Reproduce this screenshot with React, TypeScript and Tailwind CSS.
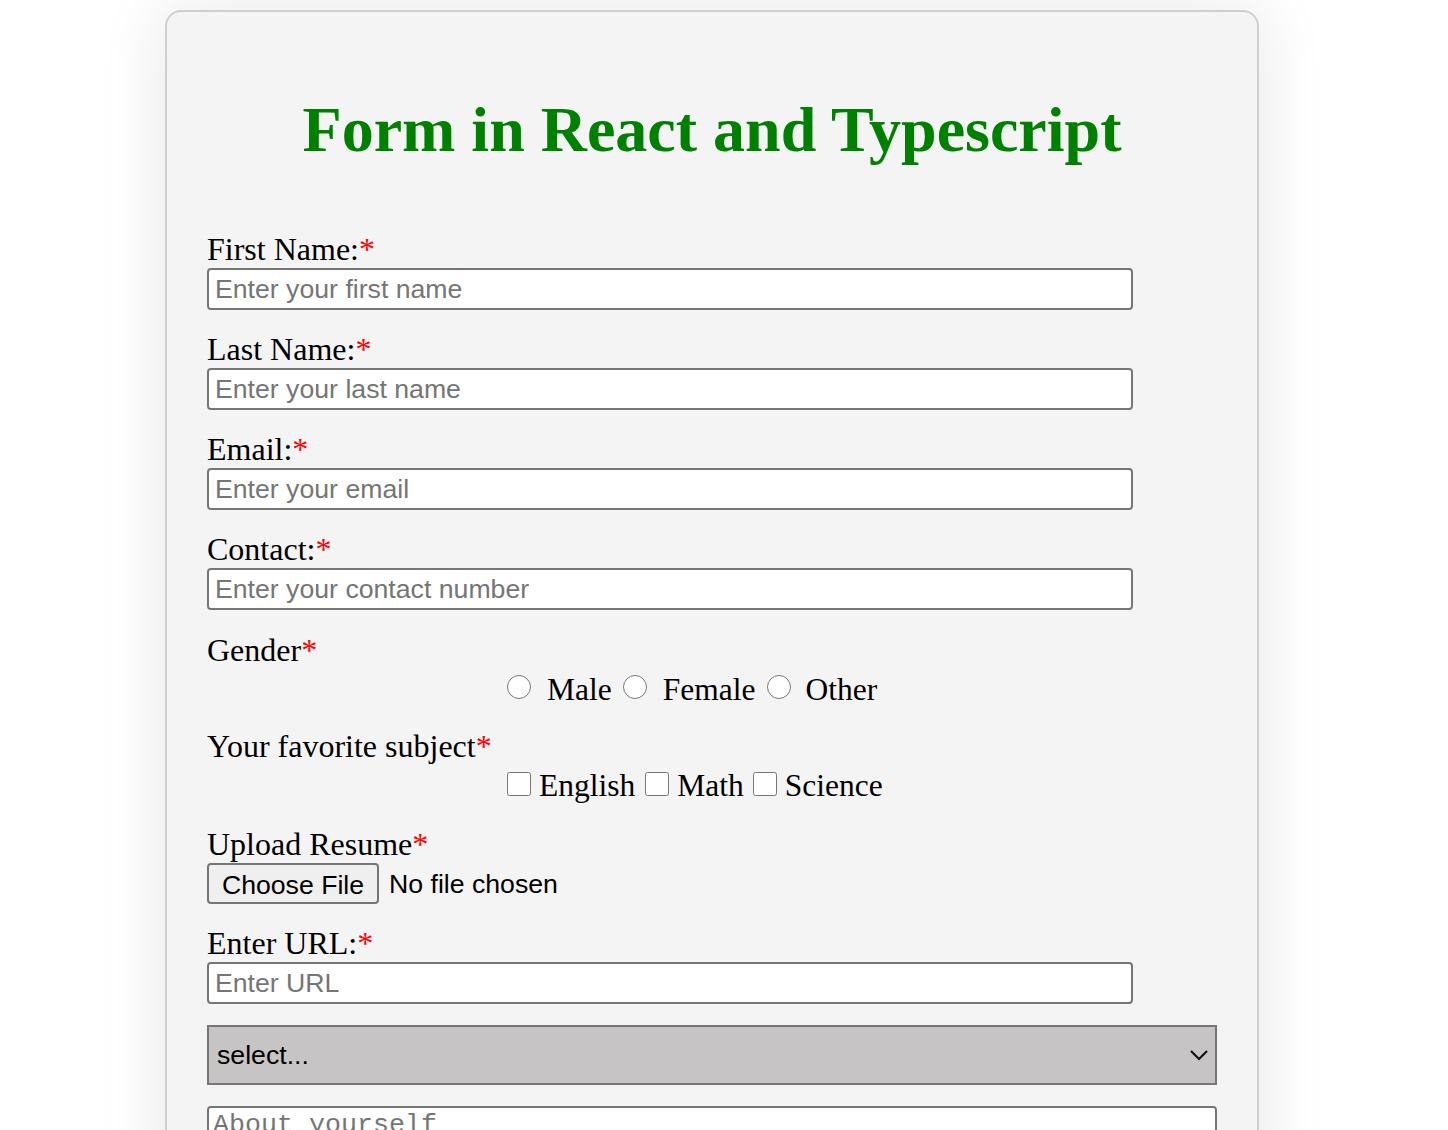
import React from "react";

const serif = "font-['Liberation_Serif',serif]";
const sans = "font-['Liberation_Sans',Arial,sans-serif]";

const Req = () => <span className="text-[#ff0000]">*</span>;

const TextField = ({ label, placeholder, type = "text" }: { label: string; placeholder: string; type?: string }) => {
  return (
    <div className="mb-[22px]">
      <label className="block text-[32px] leading-[36px] -mt-px pb-px">
        {label}
        <Req />
      </label>
      <input
        type={type}
        placeholder={placeholder}
        className={`${sans} block w-[926px] h-[42px] border-2 border-[#767676] rounded-[4px] bg-white px-[6px] text-[26.67px] text-black placeholder:text-[#757575] outline-none`}
      />
    </div>
  );
};

const Radio = ({ name, className }: { name: string; className: string }) => (
  <input type="radio" name={name} className={`w-6 h-6 mt-[3px] shrink-0 ${className}`} />
);

const Check = ({ className }: { className: string }) => (
  <input type="checkbox" className={`w-6 h-6 mt-[4px] shrink-0 ${className}`} />
);

const App = () => {
  return (
    <div className={`${serif} bg-white min-h-screen pt-[10px] overflow-hidden text-black`}>
      <div className="ml-[165px] w-[1094px] bg-[#f4f4f4] border-2 border-[#d3cece] rounded-[16px] shadow-[0_0_70px_rgba(0,0,0,0.1)] px-[40px] pt-[81px] pb-[60px]">
        <h1 className="text-center text-[64px] leading-[74px] font-bold text-[#008000] mb-[65px]">
          Form in React and Typescript
        </h1>

        <form>
          <TextField label="First Name:" placeholder="Enter your first name" />
          <TextField label="Last Name:" placeholder="Enter your last name" />
          <TextField label="Email:" placeholder="Enter your email" type="email" />
          <TextField label="Contact:" placeholder="Enter your contact number" />

          <div className="mb-[20px]">
            <label className="block text-[32px] leading-[36px]">
              Gender
              <Req />
            </label>
            <div className="flex items-start pl-[300px] mt-[4px] text-[31.5px] leading-[36px]">
              <Radio name="gender" className="mr-[16px]" />
              <span>Male</span>
              <Radio name="gender" className="ml-[11px] mr-[16px]" />
              <span>Female</span>
              <Radio name="gender" className="ml-[12px] mr-[14px]" />
              <span>Other</span>
            </div>
          </div>

          <div className="mb-[22px]">
            <label className="block text-[32px] leading-[36px]">
              Your favorite subject
              <Req />
            </label>
            <div className="flex items-start pl-[300px] mt-[4px] text-[31.5px] leading-[36px]">
              <Check className="mr-[8px]" />
              <span>English</span>
              <Check className="ml-[10px] mr-[8px]" />
              <span>Math</span>
              <Check className="ml-[9px] mr-[8px]" />
              <span>Science</span>
            </div>
          </div>

          <div className="mb-[21px]">
            <label className="block text-[32px] leading-[36px]">
              Upload Resume
              <Req />
            </label>
            <div className={`${sans} flex items-center text-[26.67px] mt-[1px]`}>
              <button
                type="button"
                className="h-[41px] w-[172px] border-2 border-[#767676] rounded-[4px] bg-[#efefef] text-black text-[26.67px]"
              >
                Choose File
              </button>
              <span className="ml-[10px]">No file chosen</span>
            </div>
          </div>

          <div className="mb-[21px]">
            <label className="block text-[32px] leading-[36px] pb-px">
              Enter URL:
              <Req />
            </label>
            <input
              type="url"
              placeholder="Enter URL"
              className={`${sans} block w-[926px] h-[42px] border-2 border-[#767676] rounded-[4px] bg-white px-[6px] text-[26.67px] placeholder:text-[#757575] outline-none`}
            />
          </div>

          <div
            className={`${sans} mb-[21px] h-[60px] w-[1010px] bg-[#c6c4c5] border-2 border-[#767676] flex items-center justify-between pl-[8px] pr-[6px] text-[26.67px]`}
          >
            <span>select...</span>
            <svg width="20" height="12" viewBox="0 0 20 12" fill="none" stroke="#111" strokeWidth="2.2">
              <polyline points="2,2 10,10 18,2" />
            </svg>
          </div>

          <textarea
            placeholder="About yourself"
            className="block w-[1010px] h-[160px] border-2 border-[#767676] rounded-[4px] bg-white px-[4px] py-[2px] font-['Liberation_Mono',monospace] text-[26.67px] leading-[30px] placeholder:text-[#757575] outline-none resize-none"
          />
        </form>
      </div>
    </div>
  );
};

export default App;
